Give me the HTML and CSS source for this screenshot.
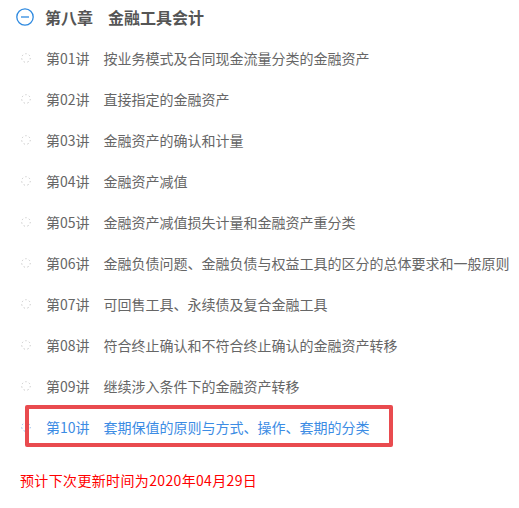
FILE: index.html
```html
<!DOCTYPE html>
<html lang="zh-CN">
<head>
<meta charset="utf-8">
<title>第八章 金融工具会计</title>
<link rel="stylesheet" href="styles.css">
</head>
<body>
<div class="chapter">
  <div class="chapter-head">
    <svg class="toggle" width="18" height="18" viewBox="0 0 18 18"><circle cx="9" cy="9" r="8.2" fill="none" stroke="#2f8ae0" stroke-width="1.3"/><line x1="5" y1="9" x2="13" y2="9" stroke="#2f8ae0" stroke-width="1.3"/></svg>
    <span class="chapter-no">第八章</span>
    <span class="chapter-title">金融工具会计</span>
  </div>
  <ul class="lessons">
    <li class="lesson"><svg class="dot" width="10" height="10" viewBox="0 0 10 10"><circle cx="5" cy="5" r="4.3" fill="none" stroke="#c8c8c8" stroke-width="1" stroke-dasharray="1.4 2.4"/></svg><span class="no">第01讲</span><span class="name">按业务模式及合同现金流量分类的金融资产</span></li>
    <li class="lesson"><svg class="dot" width="10" height="10" viewBox="0 0 10 10"><circle cx="5" cy="5" r="4.3" fill="none" stroke="#c8c8c8" stroke-width="1" stroke-dasharray="1.4 2.4"/></svg><span class="no">第02讲</span><span class="name">直接指定的金融资产</span></li>
    <li class="lesson"><svg class="dot" width="10" height="10" viewBox="0 0 10 10"><circle cx="5" cy="5" r="4.3" fill="none" stroke="#c8c8c8" stroke-width="1" stroke-dasharray="1.4 2.4"/></svg><span class="no">第03讲</span><span class="name">金融资产的确认和计量</span></li>
    <li class="lesson"><svg class="dot" width="10" height="10" viewBox="0 0 10 10"><circle cx="5" cy="5" r="4.3" fill="none" stroke="#c8c8c8" stroke-width="1" stroke-dasharray="1.4 2.4"/></svg><span class="no">第04讲</span><span class="name">金融资产减值</span></li>
    <li class="lesson"><svg class="dot" width="10" height="10" viewBox="0 0 10 10"><circle cx="5" cy="5" r="4.3" fill="none" stroke="#c8c8c8" stroke-width="1" stroke-dasharray="1.4 2.4"/></svg><span class="no">第05讲</span><span class="name">金融资产减值损失计量和金融资产重分类</span></li>
    <li class="lesson"><svg class="dot" width="10" height="10" viewBox="0 0 10 10"><circle cx="5" cy="5" r="4.3" fill="none" stroke="#c8c8c8" stroke-width="1" stroke-dasharray="1.4 2.4"/></svg><span class="no">第06讲</span><span class="name">金融负债问题、金融负债与权益工具的区分的总体要求和一般原则</span></li>
    <li class="lesson"><svg class="dot" width="10" height="10" viewBox="0 0 10 10"><circle cx="5" cy="5" r="4.3" fill="none" stroke="#c8c8c8" stroke-width="1" stroke-dasharray="1.4 2.4"/></svg><span class="no">第07讲</span><span class="name">可回售工具、永续债及复合金融工具</span></li>
    <li class="lesson"><svg class="dot" width="10" height="10" viewBox="0 0 10 10"><circle cx="5" cy="5" r="4.3" fill="none" stroke="#c8c8c8" stroke-width="1" stroke-dasharray="1.4 2.4"/></svg><span class="no">第08讲</span><span class="name">符合终止确认和不符合终止确认的金融资产转移</span></li>
    <li class="lesson"><svg class="dot" width="10" height="10" viewBox="0 0 10 10"><circle cx="5" cy="5" r="4.3" fill="none" stroke="#c8c8c8" stroke-width="1" stroke-dasharray="1.4 2.4"/></svg><span class="no">第09讲</span><span class="name">继续涉入条件下的金融资产转移</span></li>
    <li class="lesson active"><svg class="dot" width="10" height="10" viewBox="0 0 10 10"><circle cx="5" cy="5" r="4.3" fill="none" stroke="#8ab8ec" stroke-width="1" stroke-dasharray="1.4 2.4"/></svg><span class="no">第10讲</span><span class="name">套期保值的原则与方式、操作、套期的分类</span><span class="highlight"></span></li>
  </ul>
  <p class="notice">预计下次更新时间为2020年04月29日</p>
</div>
</body>
</html>
```
FILE: styles.css
```css
html, body {
  margin: 0;
  padding: 0;
  background: #fff;
}
body {
  font-family: "Noto Sans CJK SC", "Microsoft YaHei", sans-serif;
  color: #666;
}
.chapter {
  padding-top: 7px;
}
.chapter-head {
  display: flex;
  align-items: center;
  height: 20px;
  padding-left: 16px;
  font-size: 16px;
  font-weight: 700;
  color: #555;
}
.toggle {
  flex: none;
  margin-right: 11px;
}
.chapter-no {
  margin-right: 15px;
}
.lessons {
  list-style: none;
  margin: 10px 0 0;
  padding: 0;
}
.lesson {
  position: relative;
  display: flex;
  align-items: center;
  height: 41px;
  padding-left: 21px;
  font-size: 14px;
  color: #666;
  white-space: nowrap;
}
.dot {
  flex: none;
  margin-right: 15px;
}
.no {
  margin-right: 14px;
}
.lesson.active {
  color: #3c8ce4;
}
.highlight {
  position: absolute;
  left: 25px;
  top: -1px;
  width: 368px;
  height: 42px;
  box-sizing: border-box;
  border: 4px solid #e94b4f;
  border-radius: 2px;
}
.notice {
  margin: 23px 0 0;
  padding-left: 20px;
  font-size: 14px;
  line-height: 20px;
  letter-spacing: 0.35px;
  color: #f00;
}
```
